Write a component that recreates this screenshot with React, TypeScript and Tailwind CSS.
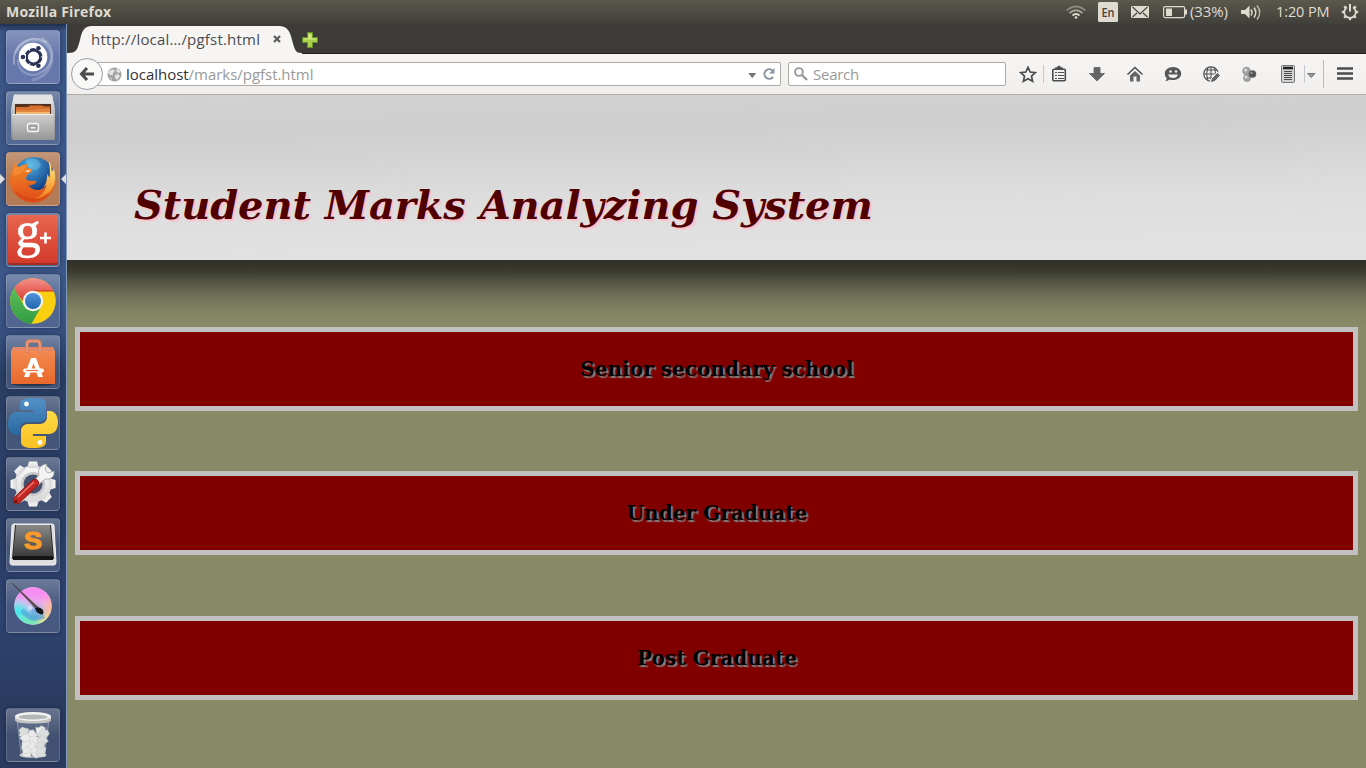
import React from "react";

const ui = "font-['Open_Sans','Noto_Sans',sans-serif]";

function Tile({ children, className = "" }: { children: React.ReactNode; className?: string }) {
  return (
    <div
      className={`relative h-[54px] w-[54px] shrink-0 rounded-[4px] border border-white/15 bg-gradient-to-b from-white/30 via-white/12 to-white/12 shadow-[0_0_4px_rgba(10,20,50,0.5)] ${className}`}
    >
      <svg className="-m-px block h-[54px] w-[54px] overflow-visible" viewBox="0 0 54 54">
        {children}
      </svg>
    </div>
  );
}

function UbuntuIcon() {
  return (
    <>
      <g fill="none" stroke="#fff" strokeLinecap="round">
        <path d="M8 34C6 14 25 3 40 12" strokeOpacity=".3" strokeWidth="2" />
        <path d="M10 22C18 6 38 6 44 20s-4 27-17 30" strokeOpacity=".2" strokeWidth="3" />
        <path d="M36 8c14 9 14 28-4 36-9 3-20-2-20-14" strokeOpacity=".25" strokeWidth="2" />
      </g>
      <circle cx="27" cy="27" r="14.3" fill="#fff" />
      <circle cx="27.5" cy="27" r="7.4" fill="none" stroke="#2c3558" strokeWidth="3.2" />
      <path d="M20 27H15M31.500 20l2-3.500M31.500 34l2 3.500" stroke="#fff" strokeWidth="6" />
      <path d="M34 27h3M24 21l-2-3.500M24 33l-2 3.500" stroke="#fff" strokeWidth="1.200" />
      <g fill="#2c3558">
        <circle cx="17" cy="27" r="2.300" />
        <circle cx="32.400" cy="18.200" r="2.300" />
        <circle cx="32.400" cy="35.800" r="2.300" />
      </g>
      <circle cx="27.500" cy="27" r="6.600" fill="none" stroke="#2c3558" strokeWidth="1.800" />
    </>
  );
}

function FilesIcon() {
  return (
    <>
      <path d="M8 4h38l3 14v30H5V18z" fill="url(#cab)" />
      <path d="M8 3.500h38l1.500 9h-41z" fill="#e3e3e3" />
      <path d="M9 13h36v11H9z" fill="#54301f" />
      <path d="M10 16h12l2-1.500h12l2 1h6V24H10z" fill="#d5702e" />
      <path d="M10 19h17l2-1h15v5H10z" fill="#e2863f" />
      <path d="M10 21h34v2H10z" fill="#f2b878" />
      <path d="M6.500 23h41l1 26h-42z" fill="url(#cab2)" />
      <path d="M6.500 23.500h41" stroke="#eee" />
      <rect x="21.500" y="32.500" width="11" height="8" rx="2" fill="#aaa" stroke="#f6f6f6" strokeWidth="1.300" />
      <rect x="24" y="35.500" width="6" height="2.500" fill="#eee" stroke="#888" strokeWidth=".6" />
    </>
  );
}

function FirefoxIcon() {
  return (
    <>
      <circle cx="28" cy="25.500" r="20.500" fill="url(#globe)" />
      <path d="M20 8q6-3 12 0l3 5-4 5-6 0-4-4z" fill="#8fd5f2" opacity=".35" />
      <path d="M50 26C50 40 40 50.500 27 50.500S4 40 4 28c0-4 1-8 3-11 0-3 1-5 3-7 0 3 1 4 3 5 3-2 6-3 10-3-2 2-3 3-2 4l5 1c1 2-1 4-4 5-1 1-2 3-2 5 3 3 6 1 10 2 1 1 0 2-2 3-2 1-4 2-6 1 6 8 16 6 20-2 2-4 3-9 2-14 5 4 6 6 6 9z" fill="url(#fox)" />
      <path d="M43 9c2 4 3 7 2.500 11l2-3c4 9 1 19-5 24-5 4-9 6-14 6 7-3 11-8 12-14l-4 3c5-5 4-10 5-14l2 4c1-6 0-12-.5-17z" fill="url(#flame)" />
      <path d="M8 17c2-2 7-3 11-3l-1 4-5 4-6 2z" fill="#f7913a" opacity=".7" />
      <path d="M19 19l6-1.500-3 3z" fill="#ffdcc0" />
      <path d="M10 40c8 9 22 11 32 2" fill="none" stroke="#b53413" strokeWidth="2" opacity=".3" />
    </>
  );
}

function GooglePlusIcon() {
  return (
    <>
      <rect x="2" y="3" width="50" height="49" rx="2" fill="#a32c20" />
      <rect x="2" y="2" width="50" height="48" rx="2" fill="url(#gp)" />
      <text x="9.500" y="33.500" fill="#fff" stroke="#fff" strokeWidth=".6" fontFamily="Liberation Serif, serif" fontSize="50">g</text>
      <path d="M39.500 19.500v11M34 25h11" stroke="#fff" strokeWidth="2.600" />
    </>
  );
}

function ChromeIcon() {
  return (
    <>
      <circle cx="27" cy="27" r="22.800" fill="#f9cf10" />
      <path d="M7.250 15.600A22.800 22.800 0 0 1 47.500 17H27a10 10 0 0 0-10 10z" fill="url(#cred)" />
      <path d="M27 17h20.500" stroke="#c53322" />
      <path d="M8.200 14.200A22.800 22.800 0 0 0 25.500 49.750L35.700 32a10 10 0 0 1-17.400 0z" fill="url(#cgreen)" />
      <circle cx="27" cy="27" r="10.200" fill="#f2f2f2" />
      <circle cx="27" cy="27" r="8" fill="url(#cblue)" />
    </>
  );
}

function StoreIcon() {
  return (
    <>
      <ellipse cx="27" cy="49" rx="22" ry="2" fill="#172845" opacity=".7" />
      <path d="M7 12h40l2 4H5z" fill="#e58664" />
      <path d="M5 16h44v33H5z" fill="url(#bag)" />
      <path d="M21 18V9q0-3 3-3h7q3 0 3 3v9" fill="none" stroke="#d9805f" strokeWidth="3.600" />
      <path d="M21 17V9q0-3 3-3h7q3 0 3 3v8" fill="none" stroke="#f3a788" strokeWidth="1" />
      <path d="M18 42l7-19h5l7 19h-5l-4.500-14L23 42z" fill="#fff" />
      <rect x="17" y="33.500" width="21" height="4" rx="2" fill="#fff" />
      <path d="M20 35.500h12" stroke="#e5743e" strokeWidth="1.200" />
    </>
  );
}

function PythonIcon() {
  return (
    <>
      <path d="M27 2c-9 0-13 2-13 6v6h13v2H11c-6 0-9 5-9 12 0 6 3 11 8 11h4v-6c0-4 3-7 7-7h12c4 0 7-3 7-7V8c0-4-4-6-13-6z" fill="url(#pyb)" />
      <path d="M27 52c9 0 13-2 13-6v-6H27v-2h16c6 0 9-5 9-12 0-6-3-11-8-11h-3v6c0 4-3 7-7 7H22c-4 0-7 3-7 7v11c0 4 4 6 12 6z" fill="url(#pyy)" />
      <circle cx="20.500" cy="8" r="2.400" fill="#fff" />
      <circle cx="34" cy="46.500" r="2.400" fill="#fff" />
    </>
  );
}

function SettingsIcon() {
  return (
    <>
      <g fill="url(#gear)">
        <circle cx="27" cy="27" r="18.500" />
        {[0, 45, 90, 135, 180, 225, 270, 315].map((a) => (
          <path key={a} d="M21 11l2-6.500h8l2 6.500z" transform={`rotate(${a} 27 27)`} />
        ))}
      </g>
      <circle cx="27" cy="27" r="12" fill="#c9c9cc" />
      <circle cx="27" cy="27" r="9.500" fill="#44506d" />
      <path d="M24 28l9-10c-2-6 2-11 8-11l-2 6 3 3 6-2c1 6-4 9-9 8L28 32z" fill="#f3f3f2" stroke="#999" strokeWidth=".7" />
      <path d="M11 43L29 26" stroke="#8b1614" strokeWidth="8" strokeLinecap="round" />
      <path d="M11 43L29 26" stroke="#c32723" strokeWidth="6.800" strokeLinecap="round" />
      <path d="M12 40l16-15" stroke="#f08078" strokeWidth="1.300" />
      <circle cx="10" cy="44.500" r="1.400" fill="#68140e" />
    </>
  );
}

function SublimeIcon() {
  return (
    <>
      <path d="M8 6h38q2 0 2 2l2 36q0 3-2 3H6q-2 0-2-3L6 8q0-2 2-2z" fill="#ddd" stroke="#f4f4f4" />
      <path d="M9 7h36l3 34H6z" fill="#242424" />
      <path d="M10 7h34l3 31H7z" fill="url(#key)" />
      <path d="M7 38h40v4H7z" fill="#151515" />
      <text x="18" y="31" fill="#f89a2b" fontFamily="Liberation Sans, sans-serif" fontWeight="700" fontSize="24" textLength="18" lengthAdjust="spacingAndGlyphs" stroke="#f89a2b" strokeWidth="1.200">S</text>
    </>
  );
}

function KritaIcon() {
  return (
    <>
      <defs>
        <clipPath id="disc"><circle cx="27" cy="27" r="18.700" /></clipPath>
        <filter id="soft"><feGaussianBlur stdDeviation="4" /></filter>
      </defs>
      <g clipPath="url(#disc)">
        <rect width="54" height="54" fill="#e9c2ec" />
        <g filter="url(#soft)">
          <path d="M0 0h54v22H0z" fill="#f78df2" />
          <path d="M0 23h20v31H0z" fill="#43e8eb" />
          <path d="M15 37h22v17H15z" fill="#76efb1" />
          <path d="M34 36h20v18H34z" fill="#f8ed65" />
          <path d="M40 20h14v18H40z" fill="#fdb98e" />
          <circle cx="30" cy="34" r="7" fill="#4c9ae4" />
        </g>
        <path d="M16 31c6 8 12 10 22 6" fill="none" stroke="#3e91dd" strokeWidth="5" opacity=".5" />
      </g>
      <circle cx="24" cy="29" r="2.500" fill="#dff2ff" opacity=".6" />
      <path d="M6 4l27 25-2 2C23 22 14 13 6 4z" fill="#5d5450" stroke="#35302f" strokeWidth=".5" />
      <path d="M29 29c5-2 10 2 8 6-3 1-7-1-8-6z" fill="#16171c" />
    </>
  );
}

function TrashIcon() {
  const paper: [number, number][] = [[18, 24], [26, 27], [35, 23], [38, 26], [20, 31], [28, 33], [36, 33], [20, 38], [27, 39], [34, 39], [21, 44], [30, 44], [35, 44]];
  return (
    <>
      <path d="M11 11l4 34q1 4 12 4t12-4l4-34z" fill="#b6c0ce" fillOpacity=".12" stroke="#c9d0dc" strokeOpacity=".45" />
      {paper.map(([x, y], i) => (
        <path key={i} d="M-5-2l3-3 3 1 4 1-1 4 1 3-5 1-5-1 1-3z" transform={`translate(${x} ${y}) rotate(${i * 37})`} fill={i % 3 ? "#e9eae9" : "#dcdedd"} stroke="#c0c3c4" strokeWidth=".4" />
      ))}
      <ellipse cx="27" cy="47" rx="13" ry="2" fill="none" stroke="#d9dad8" strokeWidth="1.200" />
      <path d="M9 8v4q0 3.500 18 3.500T45 12V8z" fill="#c4c4c2" />
      <ellipse cx="27" cy="8.500" rx="18" ry="4.500" fill="#f2f2f0" />
      <ellipse cx="27" cy="9" rx="14.500" ry="2.500" fill="#b4b7b8" />
    </>
  );
}

function Gradients() {
  const g = (id: string, a: string, b: string) => (
    <linearGradient id={id} x1="0" y1="0" x2="0" y2="1">
      <stop stopColor={a} />
      <stop offset="1" stopColor={b} />
    </linearGradient>
  );
  return (
    <svg className="absolute h-0 w-0">
      <defs>
        {g("cab", "#e6e6e6", "#858585")}
        {g("cab2", "#cfcfcf", "#969696")}
        {g("gp", "#e8664f", "#d43a2b")}
        {g("cred", "#f5928b", "#d93a2f")}
        {g("cgreen", "#5cbf59", "#319c42")}
        {g("cblue", "#4f93da", "#2267ad")}
        {g("bag", "#f38a50", "#e9682b")}
        {g("pyb", "#5292c8", "#2868a0")}
        {g("pyy", "#ffd948", "#f8c222")}
        {g("gear", "#f8f8f8", "#d6d6d6")}
        {g("key", "#8a8a8a", "#3c3c3c")}
        {g("fox", "#f28b28", "#e04a18")}
        {g("flame", "#fff08a", "#f0801c")}
        <radialGradient id="globe" cx=".4" cy=".2" r=".65">
          <stop stopColor="#48aee2" />
          <stop offset="1" stopColor="#123a80" />
        </radialGradient>
      </defs>
    </svg>
  );
}

function Launcher() {
  return (
    <aside className="flex w-[67px] shrink-0 flex-col items-center gap-[7px] border-r border-[#8298bb] bg-[linear-gradient(180deg,#1e2e4e_0px,#3b5585_7px,#3d5788_260px,#37507f_310px,#2a3e63_350px,#2c4068_430px,#293b60_480px,#2f4471_590px,#2a3b5f_680px,#2a3b5f_744px)] pt-1.5 pb-1.5">
      <Tile className="bg-[#5165a0]"><UbuntuIcon /></Tile>
      <Tile><FilesIcon /></Tile>
      <div className="relative">
        <Tile className="bg-[#a8693f]"><FirefoxIcon /></Tile>
        <svg className="absolute top-[22px] -left-1.5 h-[10px] w-[66px]" viewBox="0 0 66 10" fill="#dcdde0">
          <path d="M0 0l5 5-5 5zM66 0l-5 5 5 5z" />
        </svg>
      </div>
      <Tile><GooglePlusIcon /></Tile>
      <Tile><ChromeIcon /></Tile>
      <Tile><StoreIcon /></Tile>
      <Tile><PythonIcon /></Tile>
      <Tile><SettingsIcon /></Tile>
      <Tile><SublimeIcon /></Tile>
      <Tile><KritaIcon /></Tile>
      <div className="mt-auto"><Tile><TrashIcon /></Tile></div>
    </aside>
  );
}

function TopPanel() {
  return (
    <header className={`flex h-6 shrink-0 items-center bg-gradient-to-b from-[#5b584c] to-[#403f3a] pl-1.5 text-[#dfdbd2] ${ui}`}>
      <span className="w-[110px] -translate-y-px text-[14px] font-bold tracking-[0.2px] whitespace-nowrap">Mozilla Firefox</span>
      <svg className="ml-auto h-6 w-[126px]" viewBox="1064 0 126 24" fill="none" stroke="#dfdbd2">
        <path d="M1066.500 10.500q9.500-8 19 0" stroke="#8b887f" strokeWidth="1.700" />
        <path d="M1069.500 13q6.500-5.500 13 0" stroke="#a5a299" strokeWidth="1.700" />
        <path d="M1072.500 15.500q3.500-3 7 0" strokeWidth="1.700" />
        <circle cx="1076" cy="17.500" r="1.300" fill="#dfdbd2" stroke="none" />
        <rect x="1098" y="2" width="20" height="20" rx="1.500" fill="#dfdbd2" stroke="none" />
        <text x="1101.500" y="17" fill="#45433d" stroke="none" fontFamily="Open Sans, sans-serif" fontSize="13" fontWeight="600" textLength="13" lengthAdjust="spacingAndGlyphs">En</text>
        <rect x="1131" y="6" width="18" height="12" rx="1" fill="#dfdbd2" stroke="none" />
        <path d="M1132.500 7l7.500 7 7.500-7M1132.500 17l4.500-4M1147.500 17l-4.500-4" stroke="#45433d" strokeWidth="1.200" />
        <rect x="1163.600" y="6.600" width="21" height="11" rx="1.500" strokeWidth="1.200" />
        <path d="M1186 9.500v5" strokeWidth="2" />
        <rect x="1166" y="8.500" width="6" height="7.500" fill="#dfdbd2" stroke="none" />
      </svg>
      <span className="w-[48px] -translate-y-px text-[15px] tracking-[-0.1px] whitespace-nowrap">(33%)</span>
      <svg className="h-6 w-[38px]" viewBox="1238 0 38 24" fill="none" stroke="#dfdbd2" strokeWidth="1.500">
        <path d="M1241 10h4l4.500-4.500v13l-4.500-4.500h-4z" fill="#dfdbd2" stroke="none" />
        <path d="M1251 9.500q2 3 0 6" />
        <path d="M1254 7.500q3.600 5 0 10" />
        <path d="M1257 5.500q5.500 7 0 14" stroke="#bbb7ad" />
      </svg>
      <span className="w-[62px] text-[14.500px] tracking-[-0.1px] whitespace-nowrap">1:20 PM</span>
      <svg className="h-6 w-7" viewBox="1338 0 28 24" fill="none" stroke="#dfdbd2">
        <path d="M1347 7.200a5.800 5.800 0 1 0 6 0" strokeWidth="1.800" />
        <path d="M1350 4v7.500" strokeWidth="2" />
        {[45, 90, 135, 180, 225, 270, 315].map((a) => (
          <path key={a} d="M1350 6.500v-2.700" transform={`rotate(${a} 1350 12)`} strokeWidth="2.200" />
        ))}
      </svg>
    </header>
  );
}

function TabStrip() {
  return (
    <div className={`flex h-[30px] shrink-0 bg-[#3c3b37] ${ui}`}>
      <div className="relative flex h-[30px] w-[235px] items-center pl-6 text-[15px] text-[#4c4c4c]">
        <svg className="absolute inset-0 h-[30px] w-[235px]" viewBox="0 0 235 30">
          <path d="M0 29.500H235" stroke="#232220" />
          <path d="M0 30v-1C10 29 10 26 13 16 15 7 17 2 25 2H212c8 0 11 5 13 14 3 10 3 13 10 13v1z" fill="#f6f5f4" />
        </svg>
        <span className="relative w-[182px] tracking-[0.2px] whitespace-nowrap">http://local…/pgfst.html</span>
        <svg className="relative h-2 w-2" viewBox="0 0 8 8" stroke="#5a5a5a" strokeWidth="2.200"><path d="M1 1l6 6M7 1L1 7" /></svg>
      </div>
      <div className="flex-1 border-b border-[#232220] pt-2">
        <svg className="h-4 w-4" viewBox="0 0 16 16">
          <path d="M5.500.5h5v5h5v5h-5v5h-5v-5h-5v-5h5z" fill="#a9ce4b" stroke="#64922a" />
          <path d="M6.500 2h3v4.500H14v1H2v-1h4.500z" fill="#d3ea83" />
        </svg>
      </div>
    </div>
  );
}

function ToolbarIcons() {
  return (
    <svg className="h-10 w-[360px] shrink-0" viewBox="1006 54 360 40" fill="none" stroke="#4c4c4c">
      <path d="M1028 67.300l2.200 4.700 5.100.6-3.800 3.500 1.100 5.200-4.600-2.600-4.600 2.600 1.100-5.200-3.800-3.500 5.100-.6z" strokeWidth="1.700" />
      <path d="M1043.500 65v18M1304.500 65v18" stroke="#c3c6ca" />
      <path d="M1323.500 60v28" stroke="#b7bdc5" />
      <rect x="1052.800" y="69.300" width="12.500" height="11.500" rx="1" strokeWidth="1.600" />
      <path d="M1055.500 69v-1.500h2l.5-1.500h2l.5 1.500h2V69z" fill="#4c4c4c" strokeWidth=".5" />
      <path d="M1055 72.500h2M1058 72.500h6M1055 75.500h2M1058 75.500h6M1055 78.500h2M1058 78.500h6" strokeWidth="1.100" />
      <path d="M1094 67.500h6v6h4.500l-7.500 7.500-7.500-7.500h4.500z" fill="#666" stroke="#555" strokeWidth=".7" />
      <path d="M1127.500 74.500l7.500-7 7.500 7" strokeWidth="1.500" />
      <path d="M1130 75.500l5-4.500 5 4.500v6h-3.500v-5h-3v5h-3.500z" fill="#666" stroke="none" />
      <path d="M1173 67c5 0 8.200 3 8.200 6.500 0 4-3.500 6.500-8.200 6.500-1.500 0-2.500-.2-3.500-.6-1.500 1.200-2.800 1.600-4 1.600.8-1 1.200-2 1.200-3-1.200-1-1.900-2.500-1.900-4.500 0-3.500 3.300-6.500 8.200-6.500z" fill="#575757" stroke="none" />
      <circle cx="1170.500" cy="71.500" r="1.200" fill="#f4f3f2" stroke="none" /><circle cx="1176" cy="71.500" r="1.200" fill="#f4f3f2" stroke="none" />
      <path d="M1168 74.500h10q-1 3.500-5 3.500t-5-3.500z" fill="#f4f3f2" stroke="none" />
      <circle cx="1211" cy="74" r="7.200" strokeWidth="1.200" />
      <path d="M1204 74h14M1211 67v14M1206 70h11M1206 78h6M1208 67.500q-3 6.500 0 13M1214 67.500q3 6.500 0 10" strokeWidth="1" />
      <path d="M1210 83l1-4 6.500-7 3 2.500-6.500 7z" fill="#f4f3f2" stroke="#f4f3f2" />
      <path d="M1211.500 81.500l1-3 5-5 2 2-5 5z" fill="#666" strokeWidth=".8" />
      <circle cx="1246.500" cy="71" r="3.800" fill="#a3a3a3" stroke="#8a8a8a" strokeWidth=".7" />
      <circle cx="1247" cy="78" r="3.500" fill="#a3a3a3" stroke="#8a8a8a" strokeWidth=".7" />
      <circle cx="1252.500" cy="74" r="3.600" fill="#555" stroke="#666" strokeWidth=".5" />
      <circle cx="1245.500" cy="70" r="1.500" fill="#ddd" stroke="none" /><circle cx="1246" cy="77" r="1.500" fill="#ddd" stroke="none" /><circle cx="1251.500" cy="73" r="1" fill="#aaa" stroke="none" />
      <rect x="1281.500" y="65.500" width="13" height="17" rx="1" fill="#d2d2d2" stroke="#777" />
      <path d="M1283 68h10" stroke="#222" strokeWidth="2.600" />
      <path d="M1284 71.500h8M1284 73.500h8M1284 75.500h8M1284 77.500h8M1284 79.500h8" />
      <path d="M1307.500 73.500h7.500l-3.750 4z" fill="#999" stroke="#777" />
      <path d="M1337 68.500h16M1337 73.500h16M1337 78.500h16" strokeWidth="2.400" />
    </svg>
  );
}

function Toolbar() {
  return (
    <div className={`flex h-[41px] shrink-0 items-center border-b border-[#aeaaa5] bg-gradient-to-b from-[#f6f5f4] to-[#f0efee] pl-1 text-[15px] ${ui}`}>
      <div className="relative z-10 flex h-8 w-8 shrink-0 items-center justify-center rounded-full border border-[#99a0a7] bg-[#f8f8f7]">
        <svg className="h-4 w-4" viewBox="0 0 16 16" fill="none" stroke="#4c4c4c" strokeWidth="3"><path d="M8 2L2.500 8 8 14M3 8h12" /></svg>
      </div>
      <div className="-ml-3 flex h-6 w-[690px] shrink-0 items-center rounded-[2px] border border-[#aeaaa5] bg-white pl-[15px]">
        <svg className="h-[15px] w-[15px] shrink-0" viewBox="0 0 15 15">
          <circle cx="7.500" cy="7.500" r="7" fill="#a2a2a2" />
          <path d="M2 4l4-2 2 2-2 2v2L3 8 1 6zM8 8l3-1 2 2-3 4-2-2zM10 1l4 4-3 1-2-2zM3 10l2 1v2z" fill="#e2e2e2" />
        </svg>
        <span className="ml-1 tracking-[-0.03px] whitespace-nowrap text-[#999]"><span className="text-[#333]">localhost</span>/marks/pgfst.html</span>
        <svg className="mr-[2px] ml-auto h-4 w-8" viewBox="0 0 32 16" fill="none">
          <path d="M3 7.500h6.500L6.250 11.500z" fill="#777" stroke="#777" />
          <path d="M26.200 4.200a4.800 4.800 0 1 0 .8 6.800" stroke="#8794a0" strokeWidth="2" />
          <path d="M28.500 2v5.500H23z" fill="#8794a0" />
        </svg>
      </div>
      <div className="ml-[7px] flex h-6 w-[218px] shrink-0 items-center rounded-[2px] border border-[#aeaaa5] bg-white pl-[5px] text-[#999]">
        <svg className="h-[14px] w-[14px]" viewBox="0 0 14 14" fill="none" stroke="#999" strokeWidth="1.900"><circle cx="5" cy="5" r="3.900" /><path d="M8 8l5 5" strokeWidth="2.400" /></svg>
        <span className="ml-[5px] tracking-[-0.25px]">Search</span>
      </div>
      <ToolbarIcons />
    </div>
  );
}

function Card({ title }: { title: string }) {
  return (
    <button className="flex h-[84px] w-full shrink-0 items-center justify-center border-[5px] border-[#c0c0c0] bg-[#800000] pl-px text-[20px] font-bold tracking-[0.04px] text-black [text-shadow:2px_2px_1px_#808080]">
      {title}
    </button>
  );
}

function Page() {
  return (
    <main className="flex min-h-0 flex-1 flex-col bg-[#878967] font-['DejaVu_Serif',serif]">
      <div className="h-[165px] shrink-0 bg-[linear-gradient(179deg,#d2d2d2_0%,#cecece_22%,#d4d4d4_38%,#dddddd_60%,#e1e1e1_85%,#e2e2e2_100%)] pt-[86px] pl-[67px]">
        <h1 className="text-[40px] leading-[47px] font-bold tracking-[-0.08px] whitespace-nowrap text-[#500000] italic [text-shadow:2px_2px_1px_pink]">Student Marks Analyzing System</h1>
      </div>
      <div className="flex flex-1 flex-col bg-[linear-gradient(180deg,#303028_0px,#38382e_10px,#5b5c48_25px,#74765a_40px,#828462_53px,#878967_66px)] px-2 pt-[67px]">
        <Card title="Senior secondary school" />
        <div className="mt-[60px]"><Card title="Under Graduate" /></div>
        <div className="mt-[61px]"><Card title="Post Graduate" /></div>
      </div>
    </main>
  );
}

export default function App() {
  return (
    <div className="flex h-screen w-screen flex-col overflow-hidden">
      <Gradients />
      <TopPanel />
      <div className="flex min-h-0 flex-1">
        <Launcher />
        <div className="flex min-w-0 flex-1 flex-col">
          <TabStrip />
          <Toolbar />
          <Page />
        </div>
      </div>
    </div>
  );
}
